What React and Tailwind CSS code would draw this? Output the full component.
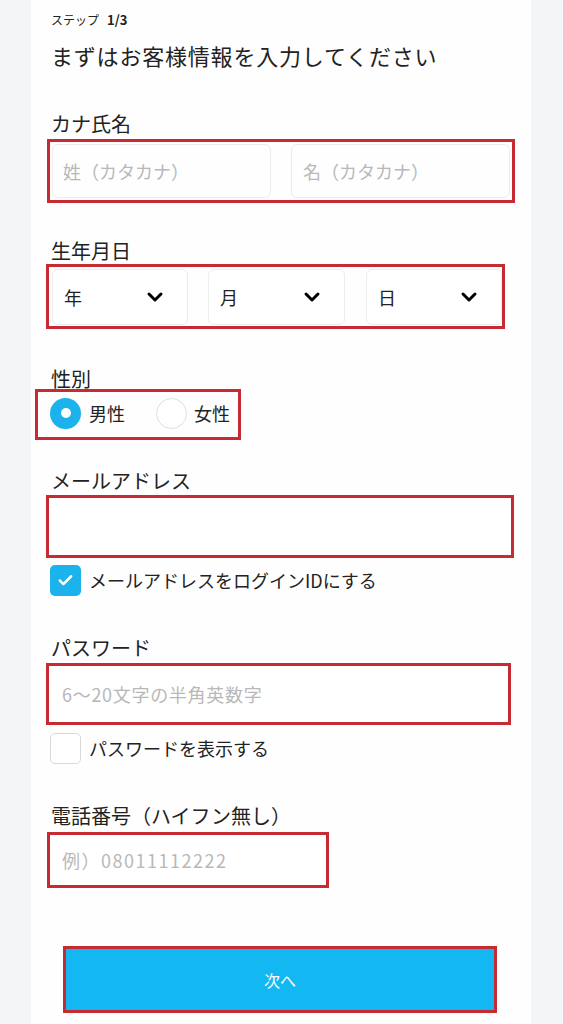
import { ChevronDown, Check } from "lucide-react";

// red annotation frame used around each field
const frame = "border-[3px] border-[#c62a33]";

function Label({ children, className = "" }) {
  return <div className={`h-6 leading-6 text-[20px] text-[#222] ${className}`}>{children}</div>;
}

function DateSelect({ label, className = "" }) {
  return (
    <div className={`h-[56px] flex items-center justify-between pl-[11px] pr-[20px] bg-white border border-[#ececec] rounded-md ${className}`}>
      <span className="text-[18px] text-[#222]">{label}</span>
      <ChevronDown size={24} strokeWidth={3} className="text-black" />
    </div>
  );
}

export default function App() {
  return (
    <div className="min-h-screen bg-[#f4f5f7] font-['Noto_Sans_CJK_JP','Noto_Sans',sans-serif] text-[#222]">
      <div className="ml-[31px] w-[500px] min-h-screen bg-[#fefefe] pl-5 pt-3">
        {/* step */}
        <div className="h-4 flex items-center text-[12px]">
          ステップ<span className="ml-2 text-[13px] font-bold">1/3</span>
        </div>
        <h1 className="mt-3 h-[30px] leading-[30px] text-[22px] tracking-[0.8px]">まずはお客様情報を入力してください</h1>

        {/* kana name */}
        <Label className="mt-[42px]">カナ氏名</Label>
        <div className={`mt-[3px] -ml-1 w-[468px] h-[64px] p-[2px] flex gap-5 ${frame}`}>
          <input
            type="text"
            placeholder="姓（カタカナ）"
            className="w-[219px] h-full px-[10px] text-[18px] border border-[#ececec] rounded-md outline-none placeholder:text-[#b8b8b8]"
          />
          <input
            type="text"
            placeholder="名（カタカナ）"
            className="w-[219px] h-full px-[11px] text-[18px] border border-[#ececec] rounded-md outline-none placeholder:text-[#b8b8b8]"
          />
        </div>

        {/* birthday */}
        <Label className="mt-9">生年月日</Label>
        <div className={`mt-px -ml-[5px] w-[459px] h-[65px] pl-[3px] pt-[2px] flex ${frame}`}>
          <DateSelect label="年" className="w-[136px]" />
          <DateSelect label="月" className="w-[137px] ml-5" />
          <DateSelect label="日" className="w-[136px] ml-[21px]" />
        </div>

        {/* gender */}
        <Label className="mt-[38px]">性別</Label>
        <div className={`-mt-[2px] -ml-4 w-[206px] h-[51px] pl-3 pb-[3px] flex items-center ${frame}`}>
          <span className="w-[31px] h-[31px] rounded-full bg-[#1cb3ec] flex items-center justify-center">
            <span className="w-[10px] h-[10px] rounded-full bg-white" />
          </span>
          <span className="ml-2 text-[18px]">男性</span>
          <span className="ml-[31px] w-[31px] h-[31px] rounded-full bg-white border border-[#dedede]" />
          <span className="ml-[7px] text-[18px]">女性</span>
        </div>

        {/* mail */}
        <Label className="mt-[29px]">メールアドレス</Label>
        <div className={`mt-[2px] -ml-[5px] w-[468px] h-[63px] ${frame}`}>
          <input type="email" className="w-full h-full px-3 text-[18px] outline-none bg-white" />
        </div>
        <div className="mt-[7px] h-[31px] flex items-center">
          <span className="-ml-px w-[31px] h-[31px] rounded-[5px] bg-[#1cb3ec] flex items-center justify-center">
            <Check size={17} strokeWidth={3.5} className="text-white" />
          </span>
          <span className="ml-2 text-[18px]">メールアドレスをログインIDにする</span>
        </div>

        {/* password */}
        <Label className="mt-10">パスワード</Label>
        <div className={`mt-[3px] -ml-[5px] w-[465px] h-[62px] ${frame}`}>
          <input
            type="password"
            placeholder="6〜20文字の半角英数字"
            className="w-full h-full pl-[13px] text-[18px] tracking-[0.7px] outline-none bg-white placeholder:text-[#b8b8b8]"
          />
        </div>
        <div className="mt-2 h-[31px] flex items-center">
          <span className="-ml-px w-[31px] h-[31px] rounded-[5px] bg-white border border-[#d9d9d9]" />
          <span className="ml-2 text-[18px]">パスワードを表示する</span>
        </div>

        {/* phone */}
        <Label className="mt-10">電話番号（ハイフン無し）</Label>
        <div className={`mt-1 -ml-1 w-[282px] h-[56px] ${frame}`}>
          <input
            type="tel"
            placeholder="例）08011112222"
            className="w-full h-full pl-3 text-[18px] tracking-[1.5px] outline-none bg-white placeholder:text-[#b8b8b8]"
          />
        </div>

        {/* next */}
        <div className={`mt-[58px] ml-3 w-[434px] h-[67px] ${frame}`}>
          <button className="w-full h-full bg-[#13b8f2] text-white text-[16px]">次へ</button>
        </div>
      </div>
    </div>
  );
}
